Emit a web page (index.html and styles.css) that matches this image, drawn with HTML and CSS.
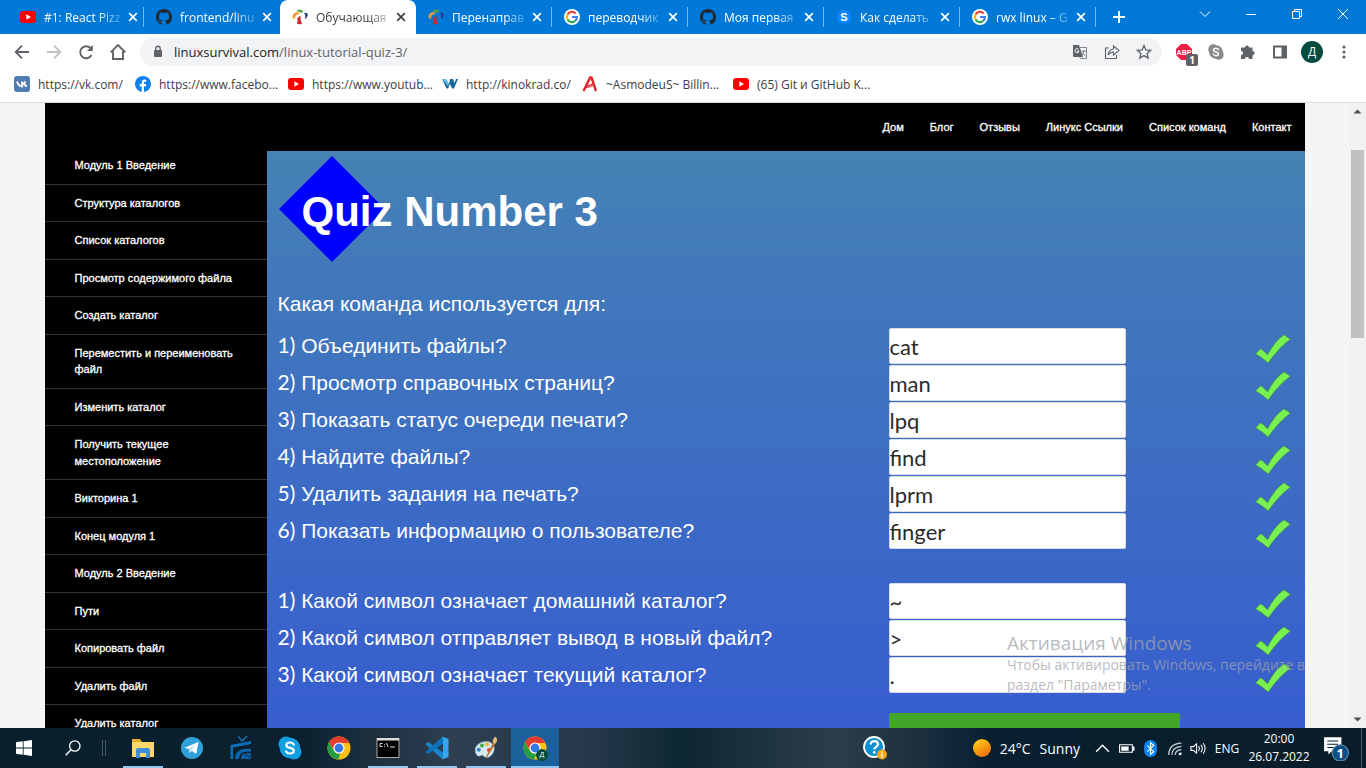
FILE: index.html
```html
<!DOCTYPE html>
<html lang="ru">
<head>
<meta charset="utf-8">
<meta name="viewport" content="width=device-width, initial-scale=1">
<title>Обучающая викторина</title>
<link rel="stylesheet" href="styles.css">
</head>
<body>
<svg class="defs" aria-hidden="true">
  <symbol id="youtube" viewBox="0 0 16 16"><rect y="2" width="16" height="12" rx="3" fill="#f00"/><path d="M6.3 5.3v5.4L11 8z" fill="#fff"/></symbol>
  <symbol id="github" viewBox="0 0 16 16"><path fill="#24292f" d="M8 0C3.58 0 0 3.58 0 8c0 3.54 2.29 6.53 5.47 7.59.4.07.55-.17.55-.38 0-.19-.01-.82-.01-1.49-2.01.37-2.53-.49-2.69-.94-.09-.23-.48-.94-.82-1.13-.28-.15-.68-.52-.01-.53.63-.01 1.08.58 1.23.82.72 1.21 1.87.87 2.33.66.07-.52.28-.87.51-1.07-1.78-.2-3.64-.89-3.64-3.95 0-.87.31-1.59.82-2.15-.08-.2-.36-1.02.08-2.12 0 0 .67-.21 2.2.82.64-.18 1.32-.27 2-.27s1.36.09 2 .27c1.53-1.04 2.2-.82 2.2-.82.44 1.1.16 1.92.08 2.12.51.56.82 1.27.82 2.15 0 3.07-1.87 3.75-3.65 3.95.29.25.54.73.54 1.48 0 1.07-.01 1.93-.01 2.2 0 .21.15.46.55.38A8.01 8.01 0 0 0 16 8c0-4.42-3.58-8-8-8z"/></symbol>
  <symbol id="survival" viewBox="0 0 16 16"><path d="M4 2.3Q8-1.200 11.500 2.500L9 4Q7 2 4 2.300z" fill="#5d9e3f"/><path d="M.5 9C.2 5 2.500 3 6.500 3.200l1 2C4.500 5 3 6.200 3 10z" fill="#f09a30"/><path d="M5 9.500l3.500-3q-.5 4 1.500 8.500-3.500 1-5.500-1 2-1.500.5-4.500z" fill="#c6282d"/><path d="M12 4q4-1 3.800 2.500Q15 9.500 12.500 10q2-3-.5-6z" fill="#293a86"/></symbol>
  <symbol id="google" viewBox="0 0 16 16"><circle cx="8" cy="8" r="8" fill="#fff"/><path d="M3.600 5.400A5 5 0 0 1 11.600 4.500" stroke="#ea4335" stroke-width="2.200" fill="none"/><path d="M3.600 5.400a5 5 0 0 0 0 5.200" stroke="#fbbc05" stroke-width="2.200" fill="none"/><path d="M3.600 10.600a5 5 0 0 0 7.600 1.200" stroke="#34a853" stroke-width="2.200" fill="none"/><path d="M8 8h5a5 5 0 0 1-1.800 3.800" stroke="#4285f4" stroke-width="2.200" fill="none"/></symbol>
  <symbol id="close" viewBox="0 0 10 10"><path d="M1.200 1.200l7.600 7.600M8.800 1.200L1.200 8.800" stroke="currentColor" stroke-width="1.700"/></symbol>
  <symbol id="check" viewBox="0 0 36 30"><path d="M.5 20l4.700-5.200q2 .2 7.300 6Q19.500 7 29 .7l6.500 4.500Q23.500 14 13.200 29.200 8 24 .5 20z" fill="#78f050" stroke="#3c7a58" stroke-width=".7"/></symbol>
  <symbol id="chrome" viewBox="0 0 24 24"><circle cx="12" cy="12" r="11.500" fill="#fbc116"/><path d="M2 6.300A11.500 11.500 0 0 1 22.300 7H12a5.500 5.500 0 0 0-5 7z" fill="#e33b2e"/><path d="M2 6.300l5 8.500A5.500 5.500 0 0 0 13.500 17.300L11 23.500A11.500 11.500 0 0 1 2 6.300z" fill="#269b48"/><circle cx="12" cy="12" r="5.600" fill="#fff"/><circle cx="12" cy="12" r="4.400" fill="#3478e5"/></symbol>
  <symbol id="skype" viewBox="0 0 24 24"><circle cx="8" cy="8" r="7.500"/><circle cx="16" cy="16" r="7.500"/><circle cx="12" cy="12" r="10.300"/><path d="M15.800 8.500Q14.800 6.500 12 6.500 8.300 6.500 8.300 9.200 8.300 11.200 12 11.900 15.800 12.600 15.800 14.800 15.800 17.500 12 17.500 9.200 17.500 8.100 15.400" fill="none" stroke="#fff" stroke-width="2.200" stroke-linecap="round"/></symbol>
</svg>

<header class="browser">
  <div class="tabstrip">
    <nav class="tabs" aria-label="Вкладки">
      <div class="tab"><svg class="favicon"><use href="#youtube"/></svg><a href="#" class="tab-title">#1: React Pizz</a><button class="tab-close" aria-label="Закрыть"><svg><use href="#close"/></svg></button></div>
      <div class="tab plain"><svg class="favicon"><use href="#github"/></svg><a href="#" class="tab-title">frontend/linu</a><button class="tab-close" aria-label="Закрыть"><svg><use href="#close"/></svg></button></div>
      <div class="tab active"><svg class="favicon"><use href="#survival"/></svg><a href="#" class="tab-title">Обучающая</a><button class="tab-close" aria-label="Закрыть"><svg><use href="#close"/></svg></button></div>
      <div class="tab"><svg class="favicon"><use href="#survival"/></svg><a href="#" class="tab-title">Перенаправ</a><button class="tab-close" aria-label="Закрыть"><svg><use href="#close"/></svg></button></div>
      <div class="tab"><svg class="favicon"><use href="#google"/></svg><a href="#" class="tab-title">переводчик</a><button class="tab-close" aria-label="Закрыть"><svg><use href="#close"/></svg></button></div>
      <div class="tab"><svg class="favicon"><use href="#github"/></svg><a href="#" class="tab-title">Моя первая</a><button class="tab-close" aria-label="Закрыть"><svg><use href="#close"/></svg></button></div>
      <div class="tab"><svg class="favicon" viewBox="0 0 16 16"><rect x="1" y="1" width="14" height="14" rx="5" fill="#0a84ff"/><text x="8" y="12" text-anchor="middle" class="s-mark">S</text></svg><a href="#" class="tab-title">Как сделать</a><button class="tab-close" aria-label="Закрыть"><svg><use href="#close"/></svg></button></div>
      <div class="tab"><svg class="favicon"><use href="#google"/></svg><a href="#" class="tab-title">rwx linux – G</a><button class="tab-close" aria-label="Закрыть"><svg><use href="#close"/></svg></button></div>
    </nav>
    <button class="new-tab" aria-label="Новая вкладка"><svg viewBox="0 0 12 12"><path d="M6 0v12M0 6h12" stroke="#fff" stroke-width="2"/></svg></button>
    <div class="window-buttons">
      <button aria-label="Поиск вкладок"><svg viewBox="0 0 12 12"><path d="M1 3.500l5 5 5-5" fill="none" stroke="#fff"/></svg></button>
      <button aria-label="Свернуть"><svg viewBox="0 0 12 12"><path d="M1 6.500h10" stroke="#fff"/></svg></button>
      <button aria-label="Восстановить"><svg viewBox="0 0 12 12"><path d="M1.500 3.500h7v7h-7zM3.500 3.500v-2h7v7h-2" fill="none" stroke="#fff"/></svg></button>
      <button aria-label="Закрыть окно"><svg viewBox="0 0 12 12"><path d="M1 1l10 10M11 1L1 11" stroke="#fff"/></svg></button>
    </div>
  </div>

  <div class="toolbar">
    <button class="tool" aria-label="Назад"><svg viewBox="0 0 16 16"><path d="M15 8H2M8 1.700L1.700 8 8 14.300" fill="none" stroke="#5f6368" stroke-width="1.800"/></svg></button>
    <button class="tool" aria-label="Вперёд"><svg viewBox="0 0 16 16"><path d="M1 8h13M8 1.700L14.300 8 8 14.300" fill="none" stroke="#bdc1c6" stroke-width="1.800"/></svg></button>
    <button class="tool" aria-label="Обновить"><svg viewBox="0 0 16 16"><path d="M13.500 11A6 6 0 1 1 12.500 4L14 6" fill="none" stroke="#5f6368" stroke-width="1.900"/><path d="M14.800 1v6H9z" fill="#5f6368"/></svg></button>
    <button class="tool" aria-label="Домой"><svg viewBox="0 0 16 16"><path d="M.7 8.300L8 1l7.300 7.300M3 7v8h10V7" fill="none" stroke="#5f6368" stroke-width="1.900"/></svg></button>
    <div class="omnibox">
      <svg class="lock" viewBox="0 0 10 14"><rect x="1" y="5" width="8" height="7" rx="1" fill="#5f6368"/><path d="M2.800 6V3.500a2.200 2.200 0 0 1 4.400 0V6" fill="none" stroke="#5f6368" stroke-width="1.400"/></svg>
      <a href="#" class="url">linuxsurvival.com<span>/linux-tutorial-quiz-3/</span></a>
      <button class="tool" aria-label="Перевести"><svg viewBox="0 0 16 16"><path d="M1 1h6l4 12H2q-1 0-1-1z" fill="#5f6368"/><path d="M8 3.500h6.500v11H8.500l-1-2" fill="none" stroke="#80868b"/><path d="M6.500 5.300A2 2 0 1 0 7 7H5.200" fill="none" stroke="#fff"/><path d="M9.500 7H14M12 6v1q-.5 3-2 4.500M10.500 8.500q1 2 3 3.500" fill="none" stroke="#80868b"/></svg></button>
      <button class="tool" aria-label="Поделиться"><svg viewBox="0 0 16 16"><path d="M5 4H1.500v10.500h11V11M9.500 2v3Q5 5.500 4 11q2-3 5.500-3v3L15 6.500z" fill="none" stroke="#5f6368" stroke-width="1.100"/></svg></button>
      <button class="tool" aria-label="В закладки"><svg viewBox="0 0 16 16"><path d="M8 1.500l1.900 4.400 4.800.4-3.600 3.100 1.100 4.700L8 11.600l-4.200 2.500 1.100-4.700L1.300 6.300l4.800-.4z" fill="none" stroke="#5f6368" stroke-width="1.300"/></svg></button>
    </div>
    <button class="tool badge-host" aria-label="Adblock Plus"><svg viewBox="0 0 16 16"><path d="M5 0h6l5 5v6l-5 5H5l-5-5V5z" fill="#ed1e45"/><text x="8" y="11" text-anchor="middle" class="abp">ABP</text></svg><span class="badge">1</span></button>
    <button class="tool" aria-label="Skype"><svg fill="#8a8a8a"><use href="#skype"/></svg></button>
    <button class="tool" aria-label="Расширения"><svg viewBox="0 0 16 16"><path d="M5 3.500a2 2 0 1 1 4 0h3.500V7a2.100 2.100 0 1 1 0 4.200V15H9a2.100 2.100 0 1 0-4.200 0H1v-4a2 2 0 1 0 0-4V3.500z" fill="#5f6368"/></svg></button>
    <button class="tool" aria-label="Боковая панель"><svg viewBox="0 0 16 16"><path d="M2 2.500h12v11H2z" fill="none" stroke="#5f6368" stroke-width="2"/><path d="M9.500 2H14v12H9.500z" fill="#5f6368"/></svg></button>
    <button class="tool" aria-label="Профиль"><span class="avatar">Д</span></button>
    <button class="tool" aria-label="Меню"><svg viewBox="0 0 16 16" fill="#5f6368"><circle cx="8" cy="3" r="1.600"/><circle cx="8" cy="8" r="1.600"/><circle cx="8" cy="13" r="1.600"/></svg></button>
  </div>

  <nav class="bookmarks" aria-label="Закладки">
    <a href="#"><svg viewBox="0 0 16 16"><rect width="16" height="16" rx="3" fill="#4f7db3"/><path d="M3 5.500q1.500 4.500 5 5v-5m0 2.500q2.500-.2 3.500-2.500M8.500 8q2.500 0 4 2.700" fill="none" stroke="#fff" stroke-width="1.900"/></svg>https://vk.com/</a>
    <a href="#"><svg viewBox="0 0 16 16"><circle cx="8" cy="8" r="8" fill="#0b80ee"/><path d="M6.700 16v-5.500h-2V8h2V6.500Q6.700 3.500 9.500 3.500l1.700.2v2h-1Q9 5.700 9 7v1h2.200l-.4 2.500H9V16z" fill="#fff"/></svg>https://www.facebo...</a>
    <a href="#"><svg><use href="#youtube"/></svg>https://www.youtub...</a>
    <a href="#"><svg viewBox="0 0 16 16"><path d="M0 3h4l3 5 1-5h3l1.500 4L14 3h2l-4 9.500h-2L8 8l-2 4.500H4.500z" fill="#17669b"/><path d="M0 3h4l3 5-1 2z" fill="#5fc3ec"/></svg>http://kinokrad.co/</a>
    <a href="#"><svg viewBox="0 0 16 16"><path d="M1.500 15L8.200 1.500h1.300L14 15M4 11l8-2.500" fill="none" stroke="#e0242c" stroke-width="2.400"/><path d="M5 10.500l6.500-1.500" stroke="#f6a0a0" stroke-width=".7"/></svg>~AsmodeuS~ Billin...</a>
    <a href="#"><svg><use href="#youtube"/></svg>(65) Git и GitHub K...</a>
  </nav>
</header>

<div class="viewport">
  <div class="page-area">
    <div class="site">
      <nav class="site-nav">
        <a href="#">Дом</a><a href="#">Блог</a><a href="#">Отзывы</a><a href="#">Линукс Ссылки</a><a href="#">Список команд</a><a href="#">Контакт</a>
      </nav>
      <div class="columns">
        <nav class="lessons">
          <a href="#">Модуль 1 Введение</a>
          <a href="#">Структура каталогов</a>
          <a href="#">Список каталогов</a>
          <a href="#">Просмотр содержимого файла</a>
          <a href="#">Создать каталог</a>
          <a href="#">Переместить и переименовать файл</a>
          <a href="#">Изменить каталог</a>
          <a href="#">Получить текущее местоположение</a>
          <a href="#">Викторина 1</a>
          <a href="#">Конец модуля 1</a>
          <a href="#">Модуль 2 Введение</a>
          <a href="#">Пути</a>
          <a href="#">Копировать файл</a>
          <a href="#">Удалить файл</a>
          <a href="#">Удалить каталог</a>
        </nav>
        <main class="quiz">
          <div class="quiz-title">
            <svg viewBox="0 0 106 106" aria-hidden="true"><path d="M53 0l53 53-53 53L0 53z" fill="#00f"/></svg>
            <h1>Quiz Number 3</h1>
          </div>
          <form>
            <p class="prompt">Какая команда используется для:</p>
            <div class="questions">
              <div class="question"><label for="a1"><b>1)</b> Объединить файлы?</label><input id="a1" type="text" value="cat"><svg><use href="#check"/></svg></div>
              <div class="question"><label for="a2"><b>2)</b> Просмотр справочных страниц?</label><input id="a2" type="text" value="man"><svg><use href="#check"/></svg></div>
              <div class="question"><label for="a3"><b>3)</b> Показать статус очереди печати?</label><input id="a3" type="text" value="lpq"><svg><use href="#check"/></svg></div>
              <div class="question"><label for="a4"><b>4)</b> Найдите файлы?</label><input id="a4" type="text" value="find"><svg><use href="#check"/></svg></div>
              <div class="question"><label for="a5"><b>5)</b> Удалить задания на печать?</label><input id="a5" type="text" value="lprm"><svg><use href="#check"/></svg></div>
              <div class="question"><label for="a6"><b>6)</b> Показать информацию о пользователе?</label><input id="a6" type="text" value="finger"><svg><use href="#check"/></svg></div>
            </div>
            <div class="questions">
              <div class="question"><label for="b1"><b>1)</b> Какой символ означает домашний каталог?</label><input id="b1" type="text" value="~"><svg><use href="#check"/></svg></div>
              <div class="question"><label for="b2"><b>2)</b> Какой символ отправляет вывод в новый файл?</label><input id="b2" type="text" value="&gt;"><svg><use href="#check"/></svg></div>
              <div class="question"><label for="b3"><b>3)</b> Какой символ означает текущий каталог?</label><input id="b3" type="text" value="."><svg><use href="#check"/></svg></div>
            </div>
            <div class="question actions"><span></span><button class="submit" type="button" aria-label="Проверить"></button></div>
          </form>
        </main>
      </div>
    </div>
  </div>
  <div class="scrollbar" aria-hidden="true">
    <svg viewBox="0 0 17 17"><path d="M4.500 10.500h8l-4-4z" fill="#505050"/></svg>
    <div class="track"><div class="thumb"></div></div>
    <svg viewBox="0 0 17 17"><path d="M4.500 6.500h8l-4 4z" fill="#505050"/></svg>
  </div>
  <aside class="activation"><strong>Активация Windows</strong><p>Чтобы активировать Windows, перейдите в раздел "Параметры".</p></aside>
</div>

<footer class="taskbar">
  <button class="app" aria-label="Пуск"><svg class="small" viewBox="0 0 16 16" fill="#fff"><path d="M0 2.300l6.800-1v6.300H0zM7.600 1.200L16 0v7.600H7.600zM0 8.400h6.800v6.300l-6.800-1zM7.600 8.400H16V16l-8.400-1.200z"/></svg></button>
  <button class="app" aria-label="Поиск"><svg class="small" viewBox="0 0 16 16"><circle cx="9.800" cy="6" r="5.200" fill="none" stroke="#fff" stroke-width="1.300"/><path d="M6 9.800L.7 15.300" stroke="#fff" stroke-width="1.400"/></svg></button>
  <span class="divider"></span>
  <button class="app open" aria-label="Проводник"><svg viewBox="0 0 24 24"><path d="M1 3h8l2 3h11v15H1z" fill="#e8a92c"/><path d="M1 6h22v15H1z" fill="#ffd868"/><path d="M5 14q0-2 2-2h10q2 0 2 2v8h-4v-5H9v5H5z" fill="#3f8fd6"/></svg></button>
  <button class="app" aria-label="Telegram"><svg viewBox="0 0 24 24"><circle cx="12" cy="12" r="11" fill="#2fa0da"/><path d="M4.500 11.700L18.500 6l-2.300 12-4.500-3.300-2.200 2.200-.5-3.900z" fill="#fff"/><path d="M9 13l7-5-5 6-1.500 3z" fill="#b9d8ea"/></svg></button>
  <button class="app" aria-label="TV"><svg viewBox="0 0 24 24"><path d="M9 0l4 5 5-5" fill="none" stroke="#1a7cc8" stroke-width="1.200"/><path d="M1.500 9L22 5v3L4 11.500V23H1.500z" fill="#0a6fba"/><path d="M6 23q0-8 7-9.500 4-1 9-.5v2.500q-6-.5-8.500 1Q10 18.500 10 23zM12 23q0-4 3-5.500L22 17v6z" fill="#0a66b0"/><path d="M15 19h3m-1.500 0v3M18.500 19l1.300 3 1.300-3" stroke="#0c2940" stroke-width=".8" fill="none"/></svg></button>
  <button class="app" aria-label="Skype"><svg fill="#109fe0"><use href="#skype"/></svg></button>
  <button class="app" aria-label="Chrome"><svg><use href="#chrome"/></svg></button>
  <button class="app open" aria-label="Командная строка"><svg viewBox="0 0 24 24"><rect x="1" y="2.500" width="22" height="19" fill="#000" stroke="#aaa"/><path d="M1 2h22v2.500H1z" fill="#ddd"/><path d="M6.500 7.500H4v3h2.500M8.500 8v.8M8.500 10v.8M10.500 7l1.500 4M14 11h5" fill="none" stroke="#ddd"/></svg></button>
  <button class="app open" aria-label="Visual Studio Code"><svg viewBox="0 0 24 24"><path d="M1 8.200L3.200 6.400 18 17v6z" fill="#1686d0" stroke="#1686d0"/><path d="M18 1v6L3.200 17.600 1 15.800z" fill="#0d72bb" stroke="#0d72bb"/><path d="M17 .5L23.500 3v18L17 23.500l1-2V2.500z" fill="#35a7f0"/></svg></button>
  <button class="app open" aria-label="Paint"><svg viewBox="0 0 24 24"><path d="M2 18Q-1 10 7 6.500q8-3 12 2 3 5-1 10-4 5-8 2-1-2-3-1-3 2-5-1.500z" fill="#d5e9f2" stroke="#8cadc1" stroke-width=".6"/><circle cx="4.800" cy="13.800" r="2" fill="#2a83d6"/><circle cx="8" cy="9.500" r="2" fill="#46a849"/><circle cx="13" cy="8.300" r="2" fill="#edb42a"/><circle cx="15" cy="14" r="2" fill="#dc4531"/><path d="M12 22l7.300-15 1.500 1z" fill="#bd7338" stroke="#bd7338"/><path d="M19 7q-1-4 2.500-6.500Q25 5 21 8z" fill="#e5b87a"/></svg></button>
  <button class="app open current" aria-label="Chrome"><svg><use href="#chrome"/></svg><span class="mini">Д</span></button>
  <div class="tray">
    <button class="help" aria-label="Справка"><svg viewBox="0 0 24 24"><circle cx="11" cy="11" r="10" fill="#0a8fd0" stroke="#fff" stroke-width="1.800"/><path d="M7.500 8.500q.5-3.300 4-3.300t3.500 3q0 1.800-2 2.800-1.700 1-1.700 2.500" fill="none" stroke="#fff" stroke-width="2.300"/><circle cx="11.300" cy="16.300" r="1.400" fill="#fff"/><circle cx="19" cy="18.500" r="5" fill="#f4a71d"/><path d="M19 15.500v1.200M19 17.800v4" stroke="#fff" stroke-width="1.400"/></svg></button>
    <button class="weather"><svg viewBox="0 0 18 18"><defs><linearGradient id="sun" x1=".2" y1="0" x2=".8" y2="1"><stop stop-color="#ffcf1c"/><stop offset="1" stop-color="#ed6a0b"/></linearGradient></defs><circle cx="9" cy="9" r="9" fill="url(#sun)"/></svg><span>24°C</span><span>Sunny</span></button>
    <button class="status" aria-label="Скрытые значки"><svg viewBox="0 0 16 16"><path d="M2 11l6-6 6 6" fill="none" stroke="#fff" stroke-width="1.300"/></svg></button>
    <button class="status" aria-label="Батарея"><svg viewBox="0 0 16 16"><path d="M1.500 4.500h12v7h-12z" fill="none" stroke="#fff"/><path d="M3 6h7v4H3zM14 6h1.500v4H14z" fill="#fff"/></svg></button>
    <button class="status" aria-label="Bluetooth"><svg viewBox="0 0 16 16"><rect x="2" width="12" height="16" rx="6" fill="#0a84ee"/><path d="M5 5l6 6-3 2.500v-11L11 5l-6 6" fill="none" stroke="#fff" stroke-width="1.100"/></svg></button>
    <button class="status" aria-label="Wi-Fi"><svg viewBox="0 0 16 16"><path d="M2.500 14Q3 3.500 14.500 3M5.500 14q.5-7.500 9-8M8.500 14q.5-4.500 6-5" fill="none" stroke="#c9d1d6" stroke-width="1.200"/><path d="M12 14v-1.500l2.500-1V14z" fill="#fff"/></svg></button>
    <button class="status" aria-label="Звук"><svg viewBox="0 0 18 16"><path d="M1 6h2.500L7 3v10L3.500 10H1zM9 5.500q2 2.500 0 5M11.500 4q3 4 0 8M14 2.500q4 5.500 0 11" fill="none" stroke="#fff" stroke-width="1.100"/></svg></button>
    <button class="lang">ENG</button>
    <button class="clock"><span>20:00</span><span>26.07.2022</span></button>
    <button class="notices" aria-label="Уведомления"><svg viewBox="0 0 24 24"><path d="M1 2h16v13H8l-3 3v-3H1z" fill="#fff"/><path d="M4 5.500h10M4 8.500h10M4 11.500h6" stroke="#0b2231"/><circle cx="16" cy="16.500" r="7.500" fill="#0b5188" stroke="#6c91ac"/><text x="16" y="21" text-anchor="middle">1</text></svg></button>
  </div>
</footer>
</body>
</html>
```
FILE: styles.css
```css
* { box-sizing: border-box; }

body {
  margin: 0;
  height: 100vh;
  display: flex;
  flex-direction: column;
  overflow: hidden;
  font-family: "Open Sans", "Noto Sans", sans-serif;
  font-size: 12px;
}

button {
  border: 0;
  padding: 0;
  background: none;
  color: inherit;
  font: inherit;
}

a { color: inherit; text-decoration: none; }
svg { flex: none; display: block; }
.defs { position: absolute; width: 0; height: 0; }

/* Tab strip */
.browser { flex: none; background: #fff; border-bottom: 1px solid #dadce0; }
.tabstrip { display: flex; height: 34px; padding-left: 8px; background: #0078d7; color: #fff; }
.tabs { display: flex; }
.tab {
  width: 136px;
  display: flex;
  align-items: center;
  gap: 8px;
  padding: 0 10px 0 12px;
  background: linear-gradient(#7db8e8, #7db8e8) right center / 1px 20px no-repeat;
}
.tab.plain { background: none; }
.tab.active { background: #fff; color: #3c4043; border-radius: 8px 8px 0 0; }
.favicon { width: 16px; height: 16px; }
.tab-title {
  flex: 1;
  white-space: nowrap;
  -webkit-mask-image: linear-gradient(90deg, #000 72%, rgba(0, 0, 0, 0.25));
  mask-image: linear-gradient(90deg, #000 72%, rgba(0, 0, 0, 0.25));
}
.tab-close svg { width: 10px; height: 10px; }
.new-tab { width: 46px; display: grid; place-items: center; }
.new-tab svg { width: 12px; height: 12px; }
.window-buttons { display: flex; margin-left: auto; }
.window-buttons button { width: 46px; height: 28px; display: grid; place-items: center; }
.window-buttons svg { width: 12px; height: 12px; }
.s-mark { font: bold 11px "Liberation Sans", sans-serif; fill: #fff; }

/* Toolbar */
.toolbar { display: flex; align-items: center; height: 36px; padding: 0 6px; }
.tool { width: 32px; height: 28px; display: grid; place-items: center; flex: none; }
.tool svg { width: 16px; height: 16px; }
.omnibox {
  flex: 1;
  display: flex;
  align-items: center;
  margin: 0 6px;
  padding: 0 2px 0 13px;
  height: 28px;
  border-radius: 14px;
  background: #f1f3f4;
}
.lock { width: 10px; height: 14px; }
.url { flex: 1; padding-left: 11px; font-size: 13px; color: #202124; }
.url span { color: #5f6368; }
.badge-host { position: relative; }
.badge {
  position: absolute;
  right: 2px;
  bottom: 0;
  width: 12px;
  height: 12px;
  border-radius: 2px;
  background: #5f6368;
  color: #fff;
  font-size: 10px;
  font-weight: 700;
  line-height: 12px;
}
.abp { font: bold 7px "Liberation Sans", sans-serif; fill: #fff; }
.avatar {
  width: 22px;
  height: 22px;
  border-radius: 50%;
  background: #004d40;
  color: #fff;
  line-height: 22px;
}

/* Bookmarks */
.bookmarks {
  display: grid;
  grid-template-columns: 121px 153px 154px 140px 151px auto;
  align-items: center;
  height: 32px;
  padding: 0 14px 4px;
  color: #3c4043;
}
.bookmarks a { display: flex; align-items: center; gap: 8px; white-space: nowrap; }
.bookmarks svg { width: 16px; height: 16px; }

/* Web page */
.viewport { flex: 1; min-height: 0; display: flex; position: relative; background: #f5f5f5; }
.page-area { flex: 1; min-width: 0; overflow: hidden; }
.site {
  max-width: 1260px;
  min-height: 100%;
  margin: 0 auto;
  background: #000;
  color: #fff;
  font-family: "Liberation Sans", Arial, sans-serif;
  display: flex;
  flex-direction: column;
}
.site-nav {
  display: flex;
  justify-content: flex-end;
  align-items: center;
  gap: 26px;
  height: 48px;
  padding-right: 13px;
  font-size: 11px;
  -webkit-text-stroke: 0.3px #fff;
}
.columns { flex: 1; display: flex; }
.lessons { width: 222px; flex: none; font-size: 11px; line-height: 1.5; -webkit-text-stroke: 0.3px #fff; }
.lessons a { display: block; padding: 10px 29px 10px 30px; border-top: 1px solid #333; }
.lessons a:first-child { border-top: 0; padding-top: 6px; }

.quiz { flex: 1; padding: 5px 0 0 11px; background: linear-gradient(#4682b4, #4179bb 20%, #375dcf 95%); }
.quiz-title { display: grid; align-items: center; }
.quiz-title > * { grid-area: 1 / 1; }
.quiz-title svg { width: 106px; height: 106px; margin-left: 1px; }
.quiz-title h1 { margin: 6px 0 0 24px; font-size: 42px; line-height: 48px; }
.prompt { margin: 24px 0 6px; font-size: 21px; line-height: 36px; }
.questions { display: grid; grid-auto-rows: 36px; gap: 1px; margin-bottom: 34px; }
.question {
  display: grid;
  grid-template-columns: 611fr 366fr 50px;
  align-items: center;
  font-size: 21px;
  line-height: 36px;
}
.question b { font-family: Lato, sans-serif; font-weight: 400; font-size: 21px; line-height: 1; }
.question input {
  width: 237px;
  height: 36px;
  border: 1px solid #d8dce4;
  border-radius: 2px;
  padding: 0;
  background: #fff;
  color: #2b2b2b;
  font: 22px Lato, sans-serif;
}
.question svg { width: 36px; height: 30px; margin-top: 6px; }
.actions { margin-top: -14px; }
.submit { width: 291px; height: 48px; border-radius: 2px; background: #41a62a; }

.scrollbar { width: 17px; display: flex; flex-direction: column; background: #f1f1f1; }
.scrollbar svg { width: 17px; height: 17px; }
.track { flex: 1; padding: 30px 2px 0; }
.thumb { height: 188px; background: #c1c1c1; }

.activation {
  position: absolute;
  right: 46px;
  bottom: 33px;
  width: 313px;
  color: rgba(160, 163, 170, 0.75);
  font-size: 14px;
  line-height: 20px;
  pointer-events: none;
}
.activation strong { display: block; font-size: 19px; font-weight: 400; line-height: 24px; }
.activation p { margin: 0; }

/* Taskbar */
.taskbar {
  flex: none;
  display: flex;
  height: 40px;
  color: #fff;
  background: linear-gradient(90deg, #0a1f2d 0, #0b2130 22%, #2d3f50 33%, #26394a 43%, #0d2733 50%, #2c3d4b 61%, #1c3040 67%, #0a2030 72%, #091c29 100%);
}
.app { width: 48px; display: grid; place-items: center; position: relative; margin-right: 1px; }
.app svg { width: 24px; height: 24px; }
.app .small { width: 16px; height: 16px; }
.app.open::after { content: ""; position: absolute; left: 4px; right: 4px; bottom: 0; height: 2px; background: #95c8f0; }
.app.current { background: #1b609a; }
.app.current::after { left: 0; right: 0; }
.mini {
  position: absolute;
  right: 11px;
  bottom: 7px;
  width: 12px;
  height: 12px;
  border-radius: 50%;
  background: #004d40;
  font-size: 7px;
  line-height: 12px;
}
.divider { width: 4px; height: 16px; margin: 12px 13px 0 4px; border: solid #46545f; border-width: 0 1px; }
.tray { display: flex; align-items: center; margin-left: auto; }
.help svg { width: 24px; height: 24px; }
.help { margin-right: 86px; }
.weather { display: flex; align-items: center; gap: 9px; margin-right: 10px; font-size: 14px; }
.weather svg { width: 18px; height: 18px; }
.status { width: 24px; display: grid; place-items: center; }
.status svg { width: 17px; height: 17px; }
.lang { width: 34px; }
.clock { width: 70px; display: grid; line-height: 18px; }
.notices { display: flex; width: 48px; height: 40px; margin-right: 4px; padding-left: 9px; align-items: center; border-right: 1px solid #4a5a66; }
.notices svg { width: 26px; height: 26px; }
.notices text { font: bold 12px "Open Sans", sans-serif; fill: #fff; }
```
